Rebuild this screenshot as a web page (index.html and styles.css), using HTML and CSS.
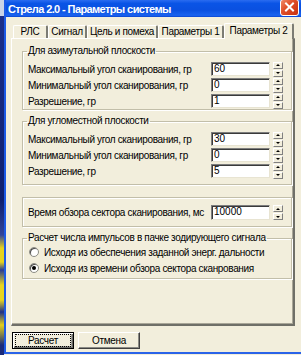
FILE: index.html
```html
<!DOCTYPE html>
<html lang="ru">
<head>
  <meta charset="UTF-8">
  <title>Стрела 2.0 - Параметры системы</title>
  <link rel="stylesheet" href="styles.css">
</head>
<body>
  <div class="desk"></div>
  <div class="win">
    <div class="caption">
      <span class="title">Стрела 2.0 - Параметры системы</span>
      <span class="close">
        <svg width="17" height="15" viewBox="0 0 17 15">
          <path d="M5 3.5 L12 10.5 M12 3.5 L5 10.5" stroke="#fff" stroke-width="2" stroke-linecap="square"/>
        </svg>
      </span>
    </div>

    <div class="tabs">
      <div class="tab w1">РЛС</div>
      <div class="tab w2">Сигнал</div>
      <div class="tab w3">Цель и помеха</div>
      <div class="tab w4">Параметры 1</div>
      <div class="tab sel">Параметры 2</div>
    </div>

    <div class="panel">
      <fieldset class="grp g1">
        <legend>Для азимутальной плоскости</legend>
        <div class="row"><span class="lbl">Максимальный угол сканирования, гр</span><span class="edit">60</span><span class="spin"><i class="up"></i><i class="dn"></i></span></div>
        <div class="row"><span class="lbl">Минимальный угол сканирования, гр</span><span class="edit">0</span><span class="spin"><i class="up"></i><i class="dn"></i></span></div>
        <div class="row"><span class="lbl">Разрешение, гр</span><span class="edit">1</span><span class="spin"><i class="up"></i><i class="dn"></i></span></div>
      </fieldset>

      <fieldset class="grp g2">
        <legend>Для угломестной плоскости</legend>
        <div class="row"><span class="lbl">Максимальный угол сканирования, гр</span><span class="edit">30</span><span class="spin"><i class="up"></i><i class="dn"></i></span></div>
        <div class="row"><span class="lbl">Минимальный угол сканирования, гр</span><span class="edit">0</span><span class="spin"><i class="up"></i><i class="dn"></i></span></div>
        <div class="row"><span class="lbl">Разрешение, гр</span><span class="edit">5</span><span class="spin"><i class="up"></i><i class="dn"></i></span></div>
      </fieldset>

      <div class="grp g3">
        <div class="row tall"><span class="lbl">Время обзора сектора сканирования, мс</span><span class="edit">10000</span><span class="spin"><i class="up"></i><i class="dn"></i></span></div>
      </div>

      <fieldset class="grp g4">
        <legend>Расчет числа импульсов в пачке зодирующего сигнала</legend>
        <div class="opt"><span class="radio"></span>Исходя из обеспечения заданной энерг. дальности</div>
        <div class="opt"><span class="radio on"></span>Исходя из времени обзора сектора сканрования</div>
      </fieldset>
    </div>

    <div class="buttons">
      <button class="btn def"><span>Расчет</span></button>
      <button class="btn"><span>Отмена</span></button>
    </div>
  </div>
</body>
</html>
```

FILE: styles.css
```css
html, body {
  margin: 0;
  height: 355px;
  overflow: hidden;
}
body {
  display: flex;
  width: 301px;
  font-family: "Liberation Sans", sans-serif;
  font-size: 10px;
  letter-spacing: -0.35px;
  color: #000;
  background: #f2eedc;
}
.desk {
  width: 4px;
  flex: none;
  background: linear-gradient(to bottom,
    #c9d3e6 0, #c9d3e6 16px,
    #1b2f8a 16px, #0e1f6e 200px,
    #31449a 235px, #e5d21c 248px, #e5d21c 262px,
    #2a3c92 270px, #e8d51e 285px, #e8d51e 300px,
    #1f2f86 312px, #e3cf1a 325px, #1a2a7a 345px);
}
.win {
  flex: 1;
  height: 352px;
  border-left: 2px solid #1c5ae6;
  border-bottom: 2px solid #2a63e8;
  background: #f2eedc;
  display: flex;
  flex-direction: column;
}
.caption {
  height: 17px;
  display: flex;
  align-items: center;
  justify-content: space-between;
  padding: 0 2px 0 2px;
  background: linear-gradient(to bottom, #2a6cf0 0, #0a54e6 20%, #0a50e0 60%, #1a63f0 90%, #0a45d0 100%);
}
.title {
  color: #fff;
  font-weight: bold;
  font-size: 11px;
  letter-spacing: -0.6px;
}
.close {
  width: 17px;
  height: 15px;
  margin-top: -2px;
  border: 1px solid #fff;
  border-radius: 3px;
  background: linear-gradient(135deg, #f08a6a 0, #e0502a 40%, #c8300e 100%);
  display: flex;
}
.tabs {
  display: flex;
  align-items: flex-end;
  height: 15px;
  margin: 6px 0 0 7px;
}
.tab {
  height: 13px;
  line-height: 12px;
  text-align: center;
  box-sizing: border-box;
  border-top: 1px solid #fff;
  border-left: 1px solid #fff;
  border-right: 2px solid #7c7c74;
  border-radius: 2px 2px 0 0;
  white-space: nowrap;
}
.w1 { width: 35px; }
.w2 { width: 39px; }
.w3 { width: 71px; }
.w4 { width: 66px; }
.tab.sel {
  width: 70px;
  height: 16px;
  line-height: 14px;
  margin-bottom: -1px;
  position: relative;
  background: #f2eedc;
}
.panel {
  margin-left: 5px;
  width: 284px;
  height: 288px;
  box-sizing: border-box;
  border-top: 1px solid #fff;
  border-left: 1px solid #fff;
  border-right: 2px solid #6f6f68;
  border-bottom: 2px solid #6f6f68;
  box-shadow: inset -1px -1px 0 #a9a698;
  padding: 6px 0 0 10px;
}
.grp {
  width: 270px;
  box-sizing: border-box;
  margin: 0;
  border: 1px solid #c2bea9;
  box-shadow: 1px 1px 0 #fff, inset 1px 1px 0 #fff;
  padding: 5px 8px 1px 5px;
  min-width: 0;
}
.grp legend {
  padding: 0 1px;
  margin-left: -1px;
  line-height: 12px;
  height: 12px;
  white-space: nowrap;
}
.g2 {
  margin-top: 5px;
  padding-bottom: 6px;
}
.g3 {
  margin-top: 12px;
  padding-top: 7px;
  padding-bottom: 6px;
}
.g4 {
  margin-top: 5px;
  padding-top: 0;
  padding-bottom: 2px;
}
.row {
  display: flex;
  align-items: center;
  height: 14px;
  margin-bottom: 2px;
}
.row:last-child { margin-bottom: 0; }
.row.tall { height: 15px; }
.lbl {
  flex: 1;
  white-space: nowrap;
}
.edit {
  width: 59px;
  height: 100%;
  box-sizing: border-box;
  background: #fff;
  border-top: 1px solid #7d7d7d;
  border-left: 1px solid #7d7d7d;
  border-right: 1px solid #e8e4d2;
  border-bottom: 1px solid #e8e4d2;
  box-shadow: inset 1px 1px 0 #3a3a3a;
  padding-left: 2px;
  line-height: 12px;
  letter-spacing: 0;
}
.spin {
  width: 10px;
  height: 15px;
  margin-left: 3px;
  display: flex;
  flex-direction: column;
  gap: 1px;
}
.spin i {
  flex: 1;
  box-sizing: border-box;
  border-top: 1px solid #fff;
  border-left: 1px solid #fff;
  border-right: 1px solid #808080;
  border-bottom: 1px solid #808080;
  display: flex;
  align-items: center;
  justify-content: center;
}
.spin i::after {
  content: "";
  border-left: 2px solid transparent;
  border-right: 2px solid transparent;
}
.spin .up::after { border-bottom: 2px solid #000; }
.spin .dn::after { border-top: 2px solid #000; }
.opt {
  display: flex;
  align-items: center;
  height: 16px;
  padding-left: 1px;
  white-space: nowrap;
}
.radio {
  width: 10px;
  height: 10px;
  box-sizing: border-box;
  border-radius: 50%;
  border: 1px solid #8c8c84;
  background: #fff;
  box-shadow: inset 1px 1px 0 #4a4a4a;
  margin-right: 5px;
  display: flex;
  align-items: center;
  justify-content: center;
}
.radio.on::after {
  content: "";
  width: 4px;
  height: 4px;
  border-radius: 50%;
  background: #000;
}
.buttons {
  display: flex;
  gap: 4px;
  margin: 6px 0 0 6px;
}
.btn {
  width: 62px;
  height: 17px;
  box-sizing: border-box;
  padding: 0;
  font: inherit;
  letter-spacing: -0.3px;
  color: #000;
  background: #f2eedc;
  border-top: 1px solid #fff;
  border-left: 1px solid #fff;
  border-right: 1px solid #404040;
  border-bottom: 1px solid #404040;
  box-shadow: inset -1px -1px 0 #8a8a84;
}
.btn.def {
  border: 1px solid #000;
  box-shadow: inset 1px 1px 0 #fff, inset -1px -1px 0 #6a6a66, inset -2px -2px 0 #a0a09a;
}
.btn span {
  display: block;
  line-height: 11px;
  margin: 0 2px;
  padding: 0;
}
.btn.def span {
  outline: 1px dotted #000;
  outline-offset: 0;
  margin: 0 3px;
}
```
